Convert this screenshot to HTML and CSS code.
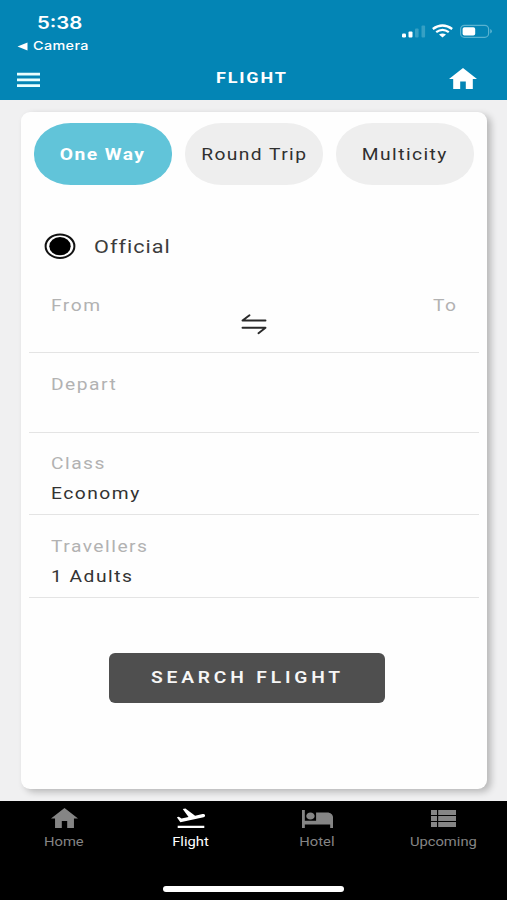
FILE: index.html
```html
<!DOCTYPE html>
<html lang="en">
<head>
<meta charset="utf-8">
<title>Flight</title>
<link rel="stylesheet" href="styles.css">
</head>
<body>
<header class="top">
  <div class="status">
    <div class="status-left">
      <div class="time"><span class="t">5:38</span></div>
      <div class="back"><svg width="11" height="9" viewBox="0 0 11 9"><path d="M0.5 4.5 10.5 0.5V8.5Z" fill="#fff"/></svg><span class="t">Camera</span></div>
    </div>
    <svg class="indicators" width="92" height="16" viewBox="0 0 92 16">
      <rect x="1" y="9.5" width="4" height="4" rx="1.2" fill="#fff"/><rect x="7.5" y="7.5" width="4" height="6" rx="1" fill="#fff"/><rect x="14" y="4.5" width="3.6" height="9" rx="1" fill="#36a0c4"/><rect x="20.5" y="1.5" width="3.6" height="12" rx="1" fill="#36a0c4"/>
      <g fill="none" stroke="#fff" stroke-width="2.3"><path d="M31.8 5Q41.5-2 51.2 5"/><path d="M35.2 8.2Q41.5 3.5 47.8 8.2"/></g><path d="M38 10.6Q41.5 8.2 45 10.6L41.5 13.6Z" fill="#fff"/>
      <rect x="59.6" y="1.3" width="28" height="12" rx="3.8" fill="none" stroke="#58b2d0" stroke-width="1.2"/><rect x="61.6" y="3.2" width="12.6" height="8.3" rx="1.8" fill="#fff"/><path d="M89.2 5v4.6q1.8-.8 1.8-2.3t-1.8-2.3" fill="#58b2d0"/>
    </svg>
  </div>
  <div class="titlebar">
    <svg width="24" height="16" viewBox="0 0 24 16"><path d="M0 .8h23v2.8H0zM0 6.5h23v2.8H0zM0 12.2h23V15H0z" fill="#e9ffff"/></svg>
    <h1><span class="t">FLIGHT</span></h1>
    <svg width="28" height="21" viewBox="2 3 20 17" preserveAspectRatio="none"><path d="M10 20v-6h4v6h5v-8h3L12 3 2 12h3v8z" fill="#fff"/></svg>
  </div>
</header>
<main>
  <section class="card">
    <div class="tabs">
      <div class="tab active"><span class="t">One Way</span></div>
      <div class="tab"><span class="t">Round Trip</span></div>
      <div class="tab"><span class="t">Multicity</span></div>
    </div>
    <div class="option">
      <svg width="32" height="27" viewBox="0 0 32 27"><ellipse cx="16" cy="13.2" rx="14.4" ry="11.8" fill="none" stroke="#111" stroke-width="2"/><ellipse cx="16" cy="13.2" rx="10.7" ry="9.1" fill="#000"/></svg>
      <span class="t">Official</span>
    </div>
    <div class="field route">
      <span class="t label">From</span>
      <svg width="26" height="22" viewBox="0 0 26 22" fill="none" stroke="#292929" stroke-width="1.9" stroke-linecap="round" stroke-linejoin="round"><path d="M24.5 7.5H1.5L8.5 2.2M1.5 14.8h23L17.5 20.2"/></svg>
      <span class="t label to">To</span>
    </div>
    <div class="field depart"><span class="t label">Depart</span></div>
    <div class="field class"><span class="t label">Class</span><span class="t value">Economy</span></div>
    <div class="field travel"><span class="t label">Travellers</span><span class="t value">1 Adults</span></div>
    <div class="search"><span class="t">SEARCH FLIGHT</span></div>
  </section>
</main>
<footer>
  <nav>
    <div class="item"><svg width="27" height="20" viewBox="2 3 20 17" preserveAspectRatio="none"><path d="M10 20v-6h4v6h5v-8h3L12 3 2 12h3v8z"/></svg><span class="t">Home</span></div>
    <div class="item on"><svg width="28" height="21" viewBox="2 3.2 20 17.8" preserveAspectRatio="none"><path d="M2.5 19h19v2h-19zM22.07 9.64c-.21-.8-1.04-1.28-1.84-1.06L14.92 10l-6.9-6.43-1.93.51 4.14 7.17-4.97 1.33-1.97-1.54-1.45.39 1.82 3.16.77 1.33 16.57-4.44c.81-.23 1.28-1.05 1.07-1.84z"/></svg><span class="t">Flight</span></div>
    <div class="item"><svg width="31" height="18" viewBox="1 5 22 15" preserveAspectRatio="none"><path d="M7 13c1.66 0 3-1.34 3-3S8.66 7 7 7s-3 1.34-3 3 1.34 3 3 3zm12-6h-8v7H3V5H1v15h2v-3h18v3h2v-9c0-2.21-1.79-4-4-4z"/></svg><span class="t">Hotel</span></div>
    <div class="item"><svg width="25" height="17" viewBox="0 0 25 17"><path d="M0 0h6v5H0zM7.2 0H25v5H7.200zM0 6h6v5H0zM7.200 6H25v5H7.200zM0 12h6v5H0zM7.200 12H25v5H7.200z"/></svg><span class="t">Upcoming</span></div>
  </nav>
  <div class="home-indicator"></div>
</footer>
</body>
</html>
```
FILE: styles.css
```css
* { box-sizing: border-box; }
body { margin: 0; width: 507px; height: 900px; display: flex; flex-direction: column; background: #f0f0f1; font-family: Roboto, sans-serif; overflow: hidden; }
svg { display: block; flex: none; }
.t { display: inline-block; white-space: nowrap; transform: scaleX(1.2); }
.top { height: 100px; background: #0385b5; color: #fff; font-family: Inter, sans-serif; }
.status { height: 57px; display: flex; justify-content: space-between; padding: 12px 14px 0 17px; }
.status-left .t { transform-origin: left; }
.time { padding-left: 20px; font-size: 17px; font-weight: 600; line-height: 22px; }
.back { display: flex; align-items: center; gap: 5px; padding-top: 1px; font-size: 12px; font-weight: 500; line-height: 22px; letter-spacing: .3px; }
.indicators { margin-top: 12px; }
.titlebar { display: grid; grid-template-columns: 24px 1fr 28px; align-items: center; height: 42px; padding: 0 30px 0 17px; }
.titlebar > svg:first-child { margin-top: 3px; }
h1 { margin: 0 0 0 14px; font: 700 15px/20px Roboto, sans-serif; letter-spacing: 1.5px; text-align: center; }
main { height: 701px; padding: 12px 20px 12px 21px; }
.card { height: 677px; padding: 11px 8px 0; background: #fefefe; border-radius: 9px; box-shadow: 4px 3px 7px rgba(0,0,0,.24); }
.tabs { display: flex; gap: 13px; padding: 0 5px; }
.tab { width: 138px; height: 62px; border-radius: 37px / 30px; background: #eee; color: #303030; display: flex; align-items: center; justify-content: center; font-size: 16px; letter-spacing: 1.2px; }
.tab.active { background: #61c4d9; color: #fff; font-weight: 700; }
.option { height: 27px; margin-top: 48px; padding-left: 15px; display: flex; align-items: center; gap: 18px; color: #3c3c3c; font-size: 18px; letter-spacing: .85px; }
.option .t, .field .t { transform-origin: left; }
.field { display: flex; flex-direction: column; align-items: flex-start; padding: 0 22px; border-bottom: 1px solid #e4e4e4; font-size: 16px; line-height: 20px; letter-spacing: 1.25px; }
.label { color: #b2b2b2; }
.value { color: #333; font-weight: 450; margin-top: 10px; }
.route { flex-direction: row; justify-content: space-between; height: 80px; margin-top: 13px; padding-top: 23px; }
.route svg { margin: 17px 0 0 -22px; }
.field .to { transform-origin: right; }
.depart { height: 80px; padding-top: 22px; }
.class { height: 82px; padding-top: 21px; }
.travel { height: 83px; padding-top: 22px; }
.search { width: 276px; height: 50px; margin: 55px 0 0 80px; border-radius: 6px; background: #4f4f4f; color: #f6f6f6; display: flex; align-items: center; justify-content: center; font-size: 16px; font-weight: 600; letter-spacing: 3.2px; padding-bottom: 1px; }
footer { height: 99px; background: #000; }
nav { display: flex; height: 84px; padding-left: 1px; }
.item { flex: 1; display: flex; flex-direction: column; align-items: center; color: #858585; fill: #858585; font-size: 12.5px; line-height: 16px; padding-top: 7px; }
.item svg { height: 20px; margin-bottom: 6px; }
.item .t { transform: scaleX(1.18); }
.item:nth-child(3) svg { height: 18px; margin: 2px 0 6px; }
.item:nth-child(4) svg { height: 17px; margin: 2px 0 7px; }
.item.on { color: #fff; fill: #fff; font-weight: 450; }
.home-indicator { width: 181px; height: 6px; margin: 1px auto 0; border-radius: 3px; background: #fff; }
```
